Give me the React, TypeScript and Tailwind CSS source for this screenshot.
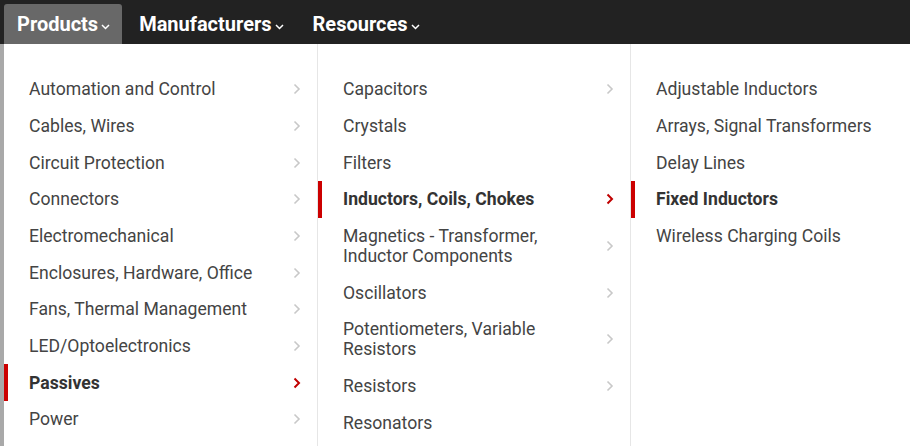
import React from "react";

type Item = { name: string; sub?: boolean; active?: boolean };

const col1: Item[] = [
  { name: "Automation and Control", sub: true },
  { name: "Cables, Wires", sub: true },
  { name: "Circuit Protection", sub: true },
  { name: "Connectors", sub: true },
  { name: "Electromechanical", sub: true },
  { name: "Enclosures, Hardware, Office", sub: true },
  { name: "Fans, Thermal Management", sub: true },
  { name: "LED/Optoelectronics", sub: true },
  { name: "Passives", sub: true, active: true },
  { name: "Power", sub: true },
];

const col2: Item[] = [
  { name: "Capacitors", sub: true },
  { name: "Crystals" },
  { name: "Filters" },
  { name: "Inductors, Coils, Chokes", sub: true, active: true },
  { name: "Magnetics - Transformer, Inductor Components", sub: true },
  { name: "Oscillators", sub: true },
  { name: "Potentiometers, Variable Resistors", sub: true },
  { name: "Resistors", sub: true },
  { name: "Resonators" },
];

const col3: Item[] = [
  { name: "Adjustable Inductors" },
  { name: "Arrays, Signal Transformers" },
  { name: "Delay Lines" },
  { name: "Fixed Inductors", active: true },
  { name: "Wireless Charging Coils" },
];

function Chevron({ active }: { active?: boolean }) {
  return (
    <svg width="8" height="12" viewBox="0 0 8 12" className="shrink-0">
      <polyline
        points="1.5,1.5 6,6 1.5,10.5"
        fill="none"
        stroke={active ? "#c00000" : "#c8c8c8"}
        strokeWidth={active ? 2 : 1.6}
      />
    </svg>
  );
}

function Caret() {
  return (
    <svg width="9" height="6" viewBox="0 0 9 6" className="ml-[3px] mt-[5px]">
      <polyline points="1,1 4.5,4.5 8,1" fill="none" stroke="white" strokeWidth="1.5" />
    </svg>
  );
}

function Column({ items, width, wrap }: { items: Item[]; width: string; wrap?: boolean }) {
  return (
    <ul className={`${width} shrink-0 pt-[27px]`}>
      {items.map((item) => (
        <li
          key={item.name}
          className={`relative flex items-center justify-between py-[8.33px] pl-[25px] pr-[16px] ${
            item.active ? "font-bold text-[#333]" : "text-[#444]"
          }`}
        >
          {item.active && <span className="absolute left-0 top-0 h-full w-[4px] bg-[#cc0000]" />}
          <span className={`leading-[20px] ${wrap ? "max-w-[225px]" : ""}`}>{item.name}</span>
          {item.sub && <Chevron active={item.active} />}
        </li>
      ))}
    </ul>
  );
}

export default function App() {
  return (
    <div className="h-[446px] w-[910px] overflow-hidden bg-white font-['Roboto',sans-serif]">
      {/* Top nav */}
      <nav className="flex h-[44px] items-end bg-[#222222] pl-[4px] text-[20px] font-bold text-white">
        <div className="flex h-[40px] items-center rounded-t-[3px] bg-[#686868] pl-[13px] pr-[12px]">
          Products
          <Caret />
        </div>
        <div className="flex h-[40px] items-center pl-[17px] pr-[15px]">
          Manufacturers
          <Caret />
        </div>
        <div className="flex h-[40px] items-center px-[14px]">
          Resources
          <Caret />
        </div>
      </nav>

      <div className="flex h-[402px]">
        {/* page peeking behind the menu */}
        <div className="w-[4px] shrink-0 bg-[#a9a9a9]" />
        {/* Mega menu */}
        <div className="flex flex-1 bg-white text-[17.6px]">
          <div className="border-r border-[#e6e6e6]">
            <Column items={col1} width="w-[313px]" />
          </div>
          <div className="border-r border-[#e6e6e6]">
            <Column items={col2} width="w-[312px]" wrap />
          </div>
          <Column items={col3} width="flex-1" />
        </div>
      </div>
    </div>
  );
}
